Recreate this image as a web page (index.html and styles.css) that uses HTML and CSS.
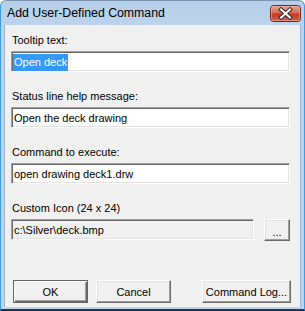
FILE: index.html
```html
<!DOCTYPE html>
<html lang="en">
<head>
  <meta charset="UTF-8" />
  <title>Add User-Defined Command</title>
  <link rel="stylesheet" href="styles.css">
</head>
<body>
  <div class="window">
    <div class="titlebar">
      <span class="title">Add User-Defined Command</span>
      <svg class="close" width="31" height="17" viewBox="0 0 31 17">
        <defs>
          <linearGradient id="closeFill" x1="0" y1="0" x2="0" y2="1">
            <stop offset="0" stop-color="#eba596" />
            <stop offset="0.45" stop-color="#d86a55" />
            <stop offset="0.55" stop-color="#c23a25" />
            <stop offset="1" stop-color="#d0654f" />
          </linearGradient>
        </defs>
        <rect x="0.5" y="0.5" width="30" height="16" rx="3" fill="url(#closeFill)" stroke="#6a2b26" />
        <rect x="1.5" y="1.5" width="28" height="14" rx="2" fill="none" stroke="#f2c2b6" stroke-opacity="0.5" />
        <path d="M11 4.5 L20 12.5 M20 4.5 L11 12.5" stroke="#3b2626" stroke-width="4" stroke-linecap="square" fill="none" />
        <path d="M11 4.5 L20 12.5 M20 4.5 L11 12.5" stroke="#fff" stroke-width="2" stroke-linecap="square" fill="none" />
      </svg>
    </div>

    <div class="client">
      <div class="field">
        <label>Tooltip text:</label>
        <div class="edit"><span class="sel">Open deck</span></div>
      </div>

      <div class="field">
        <label>Status line help message:</label>
        <div class="edit">Open the deck drawing</div>
      </div>

      <div class="field">
        <label>Command to execute:</label>
        <div class="edit">open drawing deck1.drw</div>
      </div>

      <div class="field">
        <label>Custom Icon (24 x 24)</label>
        <div class="row">
          <div class="edit readonly">c:\Silver\deck.bmp</div>
          <button class="btn browse">...</button>
        </div>
      </div>

      <div class="actions">
        <button class="btn default">OK</button>
        <button class="btn">Cancel</button>
        <button class="btn log">Command Log...</button>
      </div>
    </div>
  </div>
</body>
</html>
```

FILE: styles.css
```css
:root {
  --face: #f0f0f0;
  --frame: #bdd3eb;
  --frame-edge: #3d9be0;
  --light: #e3e3e3;
  --shadow: #a0a0a0;
  --dark: #696969;
  --select: #3399ff;
}
html, body {
  margin: 0;
  height: 100%;
  overflow: hidden;
}
body {
  font-family: 'Liberation Sans', Arial, sans-serif;
  font-size: 11px;
  color: #000;
  background: #fff;
}
.window {
  box-sizing: border-box;
  width: 305px;
  height: 311px;
  display: flex;
  flex-direction: column;
  background: linear-gradient(#b7cfe9, var(--frame) 25px);
  border: 1px solid var(--frame-edge);
  border-top-color: #7d95b2;
  border-bottom: 2px solid #1c3553;
  border-radius: 6px 6px 0 0;
  padding: 0 3px 2px 3px;
}
.titlebar {
  height: 24px;
  display: flex;
  align-items: center;
  justify-content: space-between;
  padding-left: 3px;
}
.title {
  font-size: 12.3px;
  color: #000;
}
.close {
  display: block;
}
.client {
  flex: 1;
  display: flex;
  flex-direction: column;
  background: var(--face);
  border-left: 1px solid #9fb4cc;
  border-right: 1px solid #9fb4cc;
  padding: 9px 9px 4px 6px;
}
.field {
  margin-bottom: 18px;
}
.field label {
  display: block;
  line-height: 13px;
  margin-left: 1px;
  margin-bottom: 4px;
}
.edit {
  box-sizing: border-box;
  width: 279px;
  height: 21px;
  background: #fff;
  border: 1px solid;
  border-color: var(--shadow) #fff #fff var(--shadow);
  box-shadow: inset 1px 1px var(--dark), inset -1px -1px var(--light);
  padding: 2px 2px 0 2px;
  line-height: 17px;
  white-space: nowrap;
  overflow: hidden;
}
.sel {
  display: inline-block;
  background: var(--select);
  color: #fff;
  padding-right: 1px;
  margin-left: -1px;
  padding-left: 1px;
}
.row {
  display: flex;
  gap: 10px;
}
.edit.readonly {
  width: 243px;
  background: var(--face);
}
.btn {
  box-sizing: border-box;
  height: 23px;
  padding: 0;
  font-family: inherit;
  font-size: 11px;
  color: #000;
  background: var(--face);
  border: 1px solid;
  border-color: #fff var(--dark) var(--dark) #fff;
  box-shadow: inset -1px -1px var(--shadow), inset 1px 1px var(--light);
}
.browse {
  width: 26px;
  height: 22px;
  padding-top: 3px;
}
.actions {
  margin-top: auto;
  display: flex;
  gap: 8px;
  padding-left: 2px;
}
.actions .btn {
  width: 75px;
}
.btn.default {
  border-color: #646464;
  box-shadow: inset 1px 1px #fff, inset -1px -1px var(--dark), inset -2px -2px var(--shadow);
}
.actions .log {
  width: 89px;
  margin-left: auto;
}
```
